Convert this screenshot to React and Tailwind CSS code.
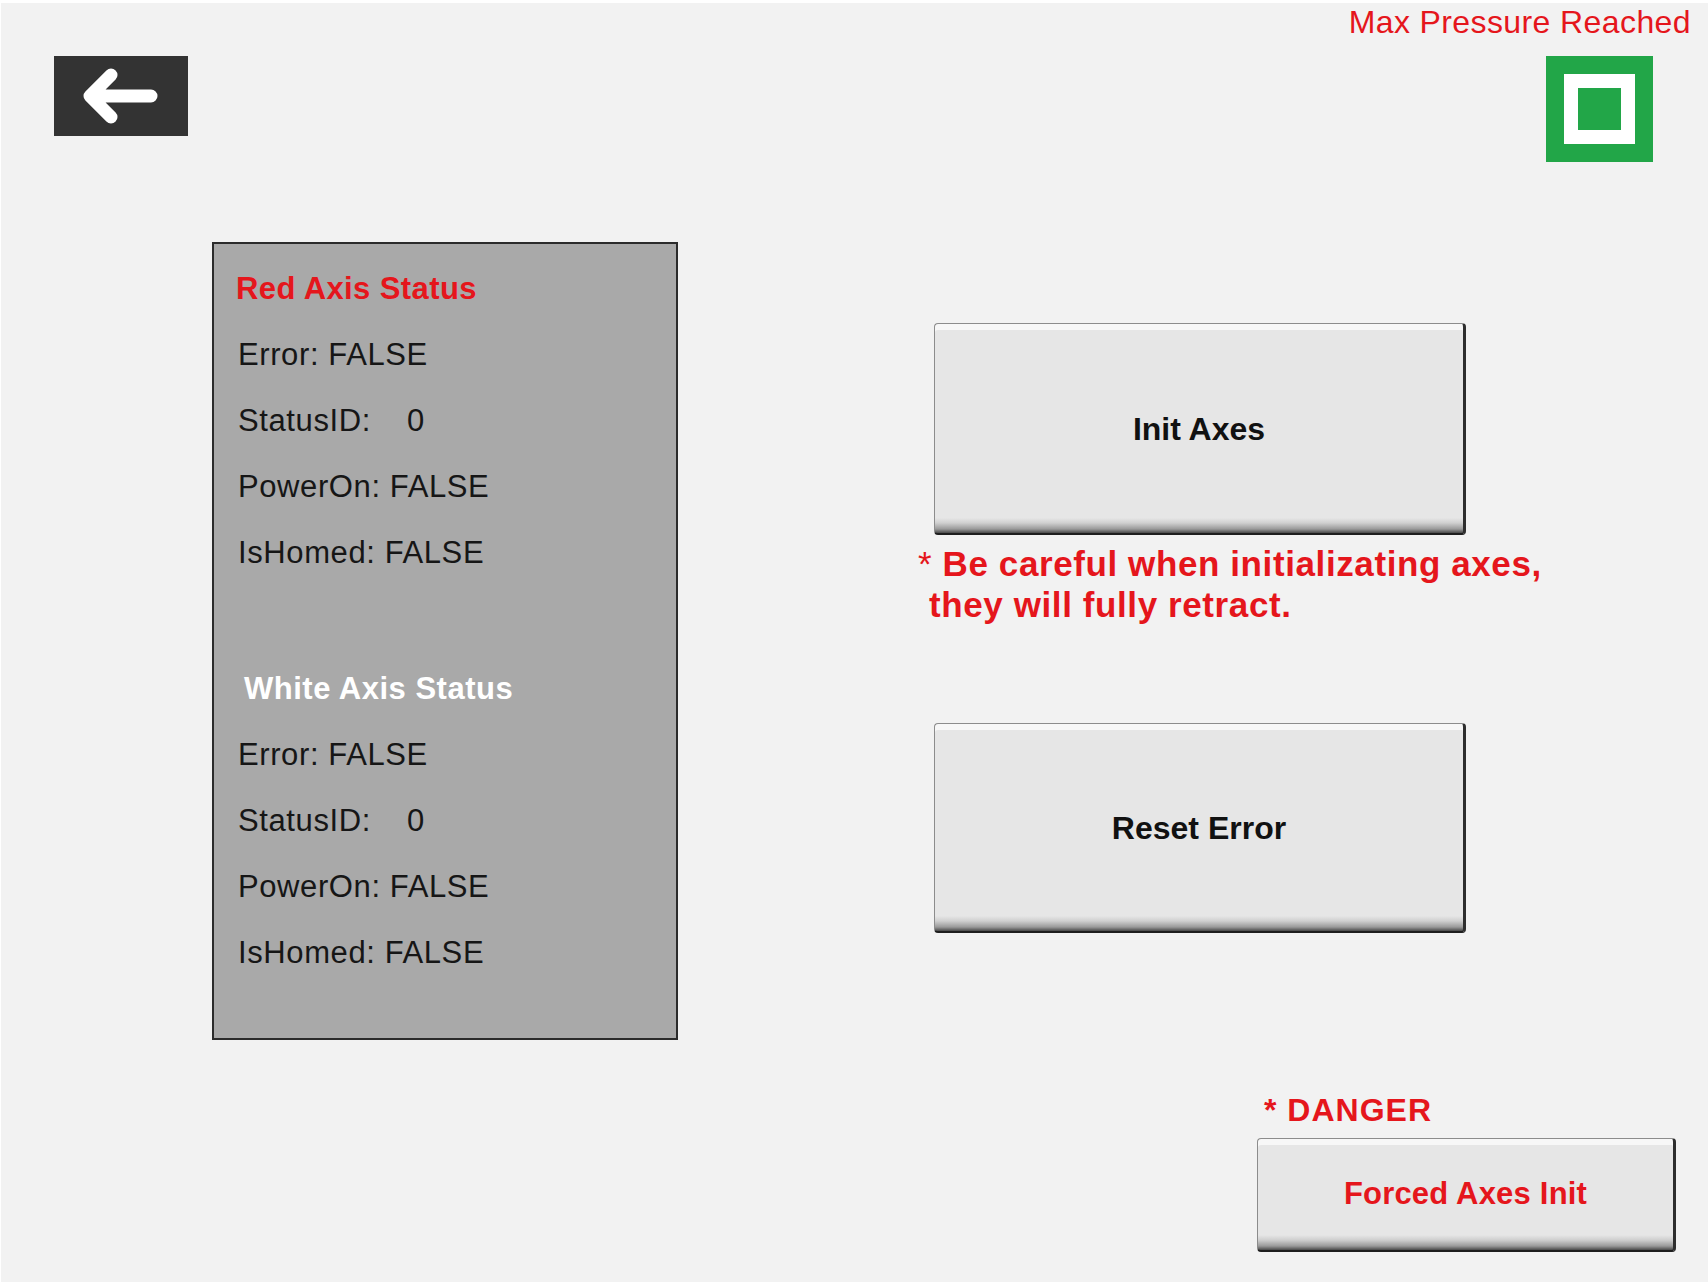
import React from "react";

const redAxis = [
  { label: "Error:", value: "FALSE" },
  { label: "StatusID:", value: "0", wide: true },
  { label: "PowerOn:", value: "FALSE" },
  { label: "IsHomed:", value: "FALSE" },
];

const whiteAxis = [
  { label: "Error:", value: "FALSE" },
  { label: "StatusID:", value: "0", wide: true },
  { label: "PowerOn:", value: "FALSE" },
  { label: "IsHomed:", value: "FALSE" },
];

// bevelled HMI push button
const HmiButton = ({ className, children }) => (
  <button
    className={`flex items-center justify-center rounded-[4px] border-t border-l border-[#8c8c8c] border-r-[3px] border-b-[2px] border-r-[#2e2e2e] border-b-[#1e1e1e] bg-[linear-gradient(to_top,#4a4a4a_0px,#9a9a9a_4px,#cfcfcf_10px,#e6e6e6_15px,#e6e6e6_100%)] shadow-[inset_0_6px_0_#f7f7f7] ${className}`}
  >
    {children}
  </button>
);

const StatusRow = ({ row }) => (
  <div className="h-[66px] leading-[66px] text-[31px] tracking-[0.6px] text-[#161616] whitespace-nowrap">
    {row.wide ? (
      <>
        <span className="inline-block w-[169px]">{row.label}</span>
        {row.value}
      </>
    ) : (
      `${row.label} ${row.value}`
    )}
  </div>
);

const App = () => {
  return (
    <div className="w-[1708px] h-[1282px] bg-[#f2f2f2] flex flex-col font-['Liberation_Sans',Arial,sans-serif] border-t-[3px] border-l border-white overflow-hidden">
      {/* Header */}
      <div className="flex justify-between">
        <button className="ml-[53px] mt-[53px] w-[134px] h-[80px] bg-[#333333] flex items-center justify-center">
          <svg width="134" height="80" viewBox="0 0 134 80">
            <path
              d="M97 40 H38 M57 19 L36 40 L57 61"
              fill="none"
              stroke="#ffffff"
              strokeWidth="13"
              strokeLinecap="round"
              strokeLinejoin="round"
            />
          </svg>
        </button>
        <div className="flex flex-col items-end mr-[17px]">
          <div className="mt-[3px] text-[32px] leading-none tracking-[0.4px] text-[#e5161c]">
            Max Pressure Reached
          </div>
          <div className="mt-[18px] mr-[38px] w-[107px] h-[106px] bg-[#22a648] p-[18px]">
            <div className="w-full h-full bg-white p-[14px]">
              <div className="w-full h-full bg-[#22a648]" />
            </div>
          </div>
        </div>
      </div>

      {/* Body */}
      <div className="flex mt-[80px]">
        <div className="ml-[211px] w-[466px] h-[798px] border-2 border-[#2b2b2b] bg-[#a9a9a9] pt-[12px] pl-[24px]">
          <div className="-ml-[2px] h-[66px] leading-[66px] text-[31px] font-bold tracking-[0.4px] text-[#e5161c]">
            Red Axis Status
          </div>
          {redAxis.map((row) => (
            <StatusRow key={`r-${row.label}`} row={row} />
          ))}
          <div className="mt-[70px] pl-[6px] h-[66px] leading-[66px] text-[31px] font-bold tracking-[0.5px] text-white">
            White Axis Status
          </div>
          {whiteAxis.map((row) => (
            <StatusRow key={`w-${row.label}`} row={row} />
          ))}
        </div>

        <div className="ml-[256px] mt-[81px] flex flex-col">
          <HmiButton className="w-[532px] h-[212px] text-[32px] font-bold text-[#111]">
            Init Axes
          </HmiButton>
          <div className="mt-[8px] -ml-[16px] text-[35px] leading-[41px] font-bold tracking-[0.6px] text-[#e5161c] whitespace-nowrap">
            <div>
              <span className="font-normal">*</span> Be careful when initializating axes,
            </div>
            <div className="pl-[11px]">they will fully retract.</div>
          </div>
          <HmiButton className="mt-[98px] w-[532px] h-[210px] text-[32px] font-bold text-[#111]">
            Reset Error
          </HmiButton>
        </div>
      </div>

      {/* Danger zone */}
      <div className="flex justify-end mr-[32px] mt-[54px]">
        <div className="flex flex-col">
          <div className="ml-[7px] text-[32px] leading-none font-bold tracking-[1px] text-[#e5161c]">
            * DANGER
          </div>
          <HmiButton className="mt-[12px] w-[419px] h-[114px] text-[31px] font-bold tracking-[0.2px] text-[#e5161c]">
            Forced Axes Init
          </HmiButton>
        </div>
      </div>
    </div>
  );
};

export default App;
